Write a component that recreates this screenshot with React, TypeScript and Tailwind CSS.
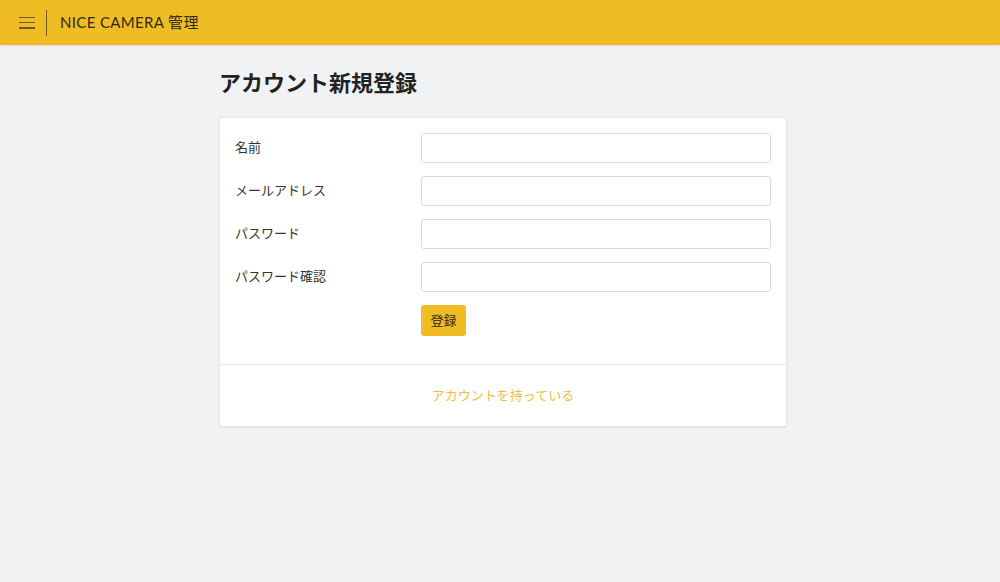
const fields = ['名前', 'メールアドレス', 'パスワード', 'パスワード確認'];

export default function App() {
  return (
    <div
      className="min-h-screen bg-[#f0f2f4] text-[#333]"
      style={{ fontFamily: 'Lato, "Noto Sans CJK JP", sans-serif' }}
    >
      <header className="h-[45px] bg-[#f0bc23] flex items-center shadow-[0_1px_2px_rgba(0,0,0,0.08)]">
        <button className="ml-[19px] w-[16px] h-[14px] flex flex-col justify-between py-[1px]">
          <span className="block h-[1.5px] w-full bg-[#6f5a1c]" />
          <span className="block h-[1.5px] w-full bg-[#6f5a1c]" />
          <span className="block h-[1.5px] w-full bg-[#6f5a1c]" />
        </button>
        <div className="ml-[11px] w-px h-[26px] bg-[#6f5a1c]" />
        <div className="ml-[13px] text-[15px] text-[#2f2a16] tracking-[0.35px]">NICE CAMERA 管理</div>
      </header>

      <main className="w-[568px] ml-[219px] pt-[24px]">
        <h1 className="text-[22px] font-bold text-[#222] leading-[28px] mb-[20px]">アカウント新規登録</h1>

        <div className="bg-white border border-[#e4e6e8] rounded-[3px] shadow-[0_1px_2px_rgba(0,0,0,0.08)]">
          <div className="px-[15px] pt-[15px] pb-[28px]">
            <div className="flex flex-col gap-[13px]">
              {fields.map((label) => (
                <div key={label} className="flex items-center">
                  <label className="w-[186px] text-[13px] text-[#333]">{label}</label>
                  <input
                    type={label.startsWith('パスワード') ? 'password' : 'text'}
                    className="flex-1 h-[30px] border border-[#dcdcdc] rounded-[3px] bg-white outline-none"
                  />
                </div>
              ))}
              <div className="flex">
                <div className="w-[186px]" />
                <button className="w-[45px] h-[31px] bg-[#f0bc23] rounded-[3px] text-[13px] text-[#2f2a16]">
                  登録
                </button>
              </div>
            </div>
          </div>
          <div className="border-t border-[#e6e8ea] h-[62px] flex items-center justify-center">
            <a className="text-[13px] text-[#efbd3a] cursor-pointer">アカウントを持っている</a>
          </div>
        </div>
      </main>
    </div>
  );
}
